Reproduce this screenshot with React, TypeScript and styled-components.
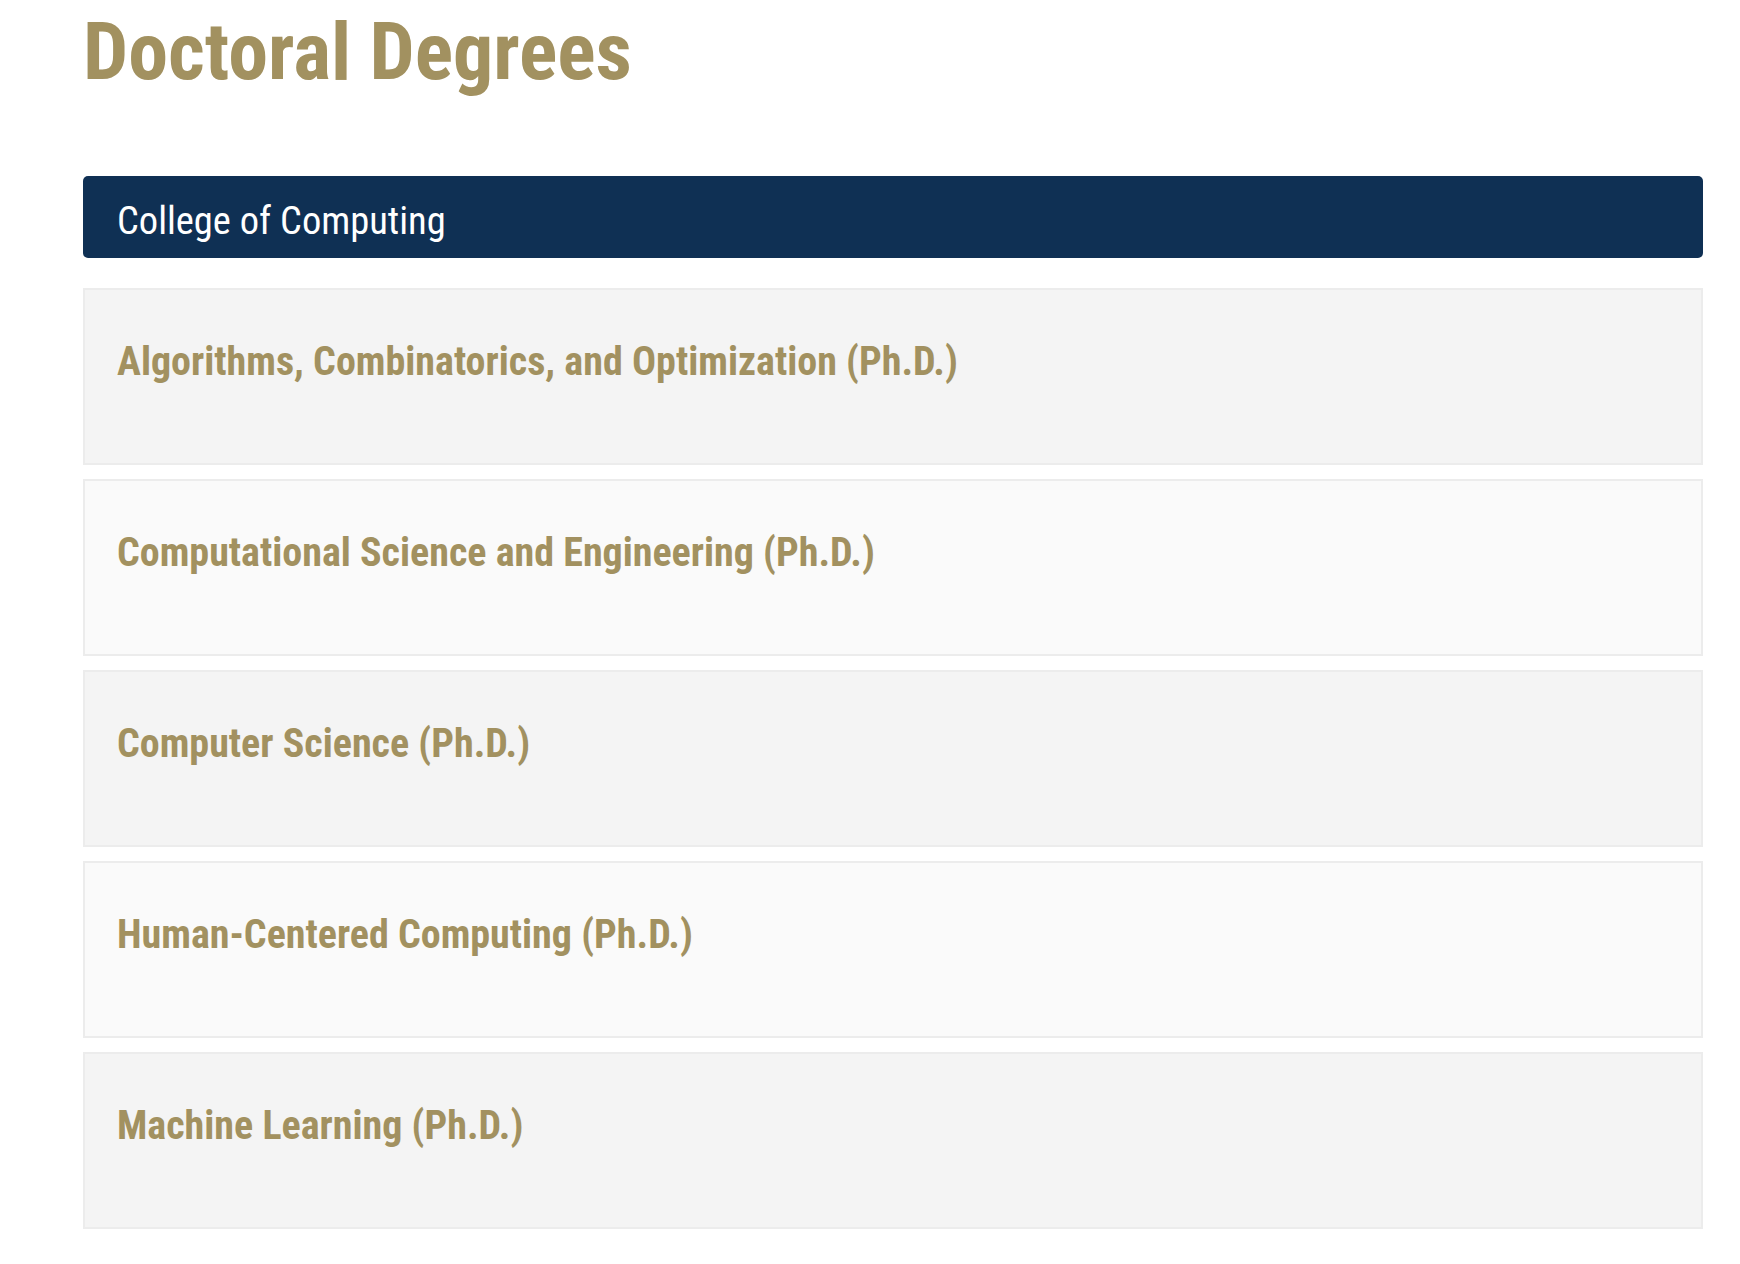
import React from "react";
import styled, { createGlobalStyle } from "styled-components";

const GlobalStyle = createGlobalStyle`
  html, body {
    margin: 0;
    padding: 0;
    background: #ffffff;
  }
  body {
    font-family: "Roboto Condensed", Roboto, "Liberation Sans", sans-serif;
    font-stretch: 75%;
  }
`;

const Page = styled.main`
  padding: 0 37px 40px 83px;
  box-sizing: border-box;
  width: 100%;
`;

const Title = styled.h1`
  margin: 0;
  padding-top: 4px;
  font-family: "Roboto Condensed", Roboto, sans-serif;
  font-stretch: 75%;
  font-weight: 700;
  font-size: 80px;
  line-height: 96px;
  color: #a29160;
`;

const CollegeBar = styled.div`
  margin-top: 76px;
  height: 82px;
  background: #0f3054;
  border-radius: 5px;
  display: flex;
  align-items: center;
  padding: 8px 34px 0;
  box-sizing: border-box;
`;

const CollegeName = styled.h2`
  margin: 0;
  font-family: "Roboto Condensed", Roboto, sans-serif;
  font-stretch: 75%;
  font-weight: 400;
  font-size: 38.5px;
  line-height: 44px;
  color: #ffffff;
`;

const List = styled.div`
  margin-top: 30px;
  display: flex;
  flex-direction: column;
  gap: 14px;
`;

const Row = styled.div<{ $alt: boolean }>`
  height: 177px;
  box-sizing: border-box;
  border: 2px solid #ececec;
  background: ${(p) => (p.$alt ? "#fafafa" : "#f4f4f4")};
  padding: 48px 32px 0;
`;

const Degree = styled.h3`
  margin: 0;
  font-family: "Roboto Condensed", Roboto, sans-serif;
  font-stretch: 75%;
  font-weight: 700;
  font-size: 40px;
  line-height: 47px;
  color: #a29160;
`;

const degrees = [
  "Algorithms, Combinatorics, and Optimization (Ph.D.)",
  "Computational Science and Engineering (Ph.D.)",
  "Computer Science (Ph.D.)",
  "Human-Centered Computing (Ph.D.)",
  "Machine Learning (Ph.D.)",
];

export default function App() {
  return (
    <>
      <GlobalStyle />
      <Page>
        <Title>Doctoral Degrees</Title>
        <CollegeBar>
          <CollegeName>College of Computing</CollegeName>
        </CollegeBar>
        <List>
          {degrees.map((d, i) => (
            <Row key={d} $alt={i % 2 === 1}>
              <Degree>{d}</Degree>
            </Row>
          ))}
        </List>
      </Page>
    </>
  );
}
